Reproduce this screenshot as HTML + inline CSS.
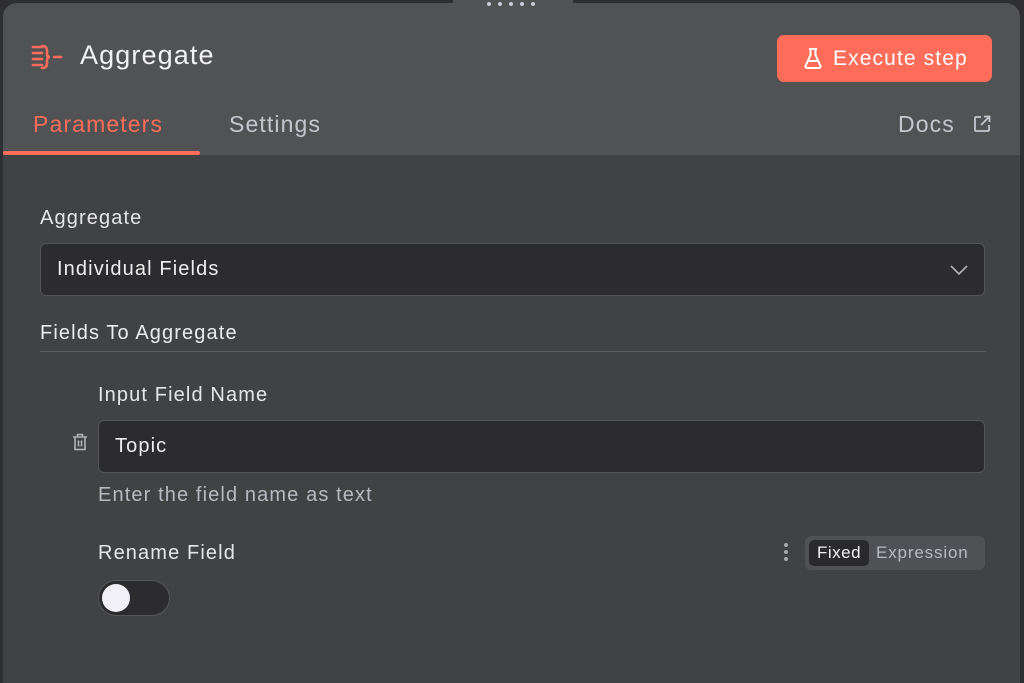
<!DOCTYPE html>
<html><head><meta charset="utf-8"><style>
*{box-sizing:border-box;margin:0;padding:0}
body{width:1024px;height:665px;overflow:hidden;background:#2e2e33;font-family:"Liberation Sans",sans-serif;position:relative;letter-spacing:0.07em}
.panel{position:absolute;left:3px;top:3px;width:1017px;height:680px;background:#414244;border-radius:14px 14px 0 0;overflow:hidden}
.head{position:absolute;left:0;top:0;width:100%;height:152px;background:#515254}
.handle{position:absolute;left:453px;top:0;width:120px;height:8px;background:#515254}
.dots{position:absolute;left:487px;top:2px;font-size:0}
.dots i{display:inline-block;width:4px;height:4px;border-radius:50%;background:#c8cad4;margin-right:7px}
.t{position:absolute;white-space:nowrap}
.btn{position:absolute;left:774px;top:32px;width:215px;height:47px;background:#ff6d5a;border-radius:7px;color:#fff;font-size:21px}
.tabline{position:absolute;left:0;top:148px;width:197px;height:4px;background:#ff6d5a;border-radius:2px}
.input{position:absolute;background:#2c2c2e;border:1px solid #545558;border-radius:6px;color:#eee;font-size:20px}
.sep{position:absolute;left:37px;top:348px;width:946px;height:1px;background:#5c5d60}
</style></head><body>
<div class="panel">
<div class="head"></div>
<svg style="position:absolute;left:27px;top:40px" width="36" height="28" viewBox="0 0 36 28" fill="none" stroke="#ff6d5a" stroke-width="2.6" stroke-linecap="round"><path d="M3 4h9M3 10h9M3 16h9M3 22h9M12 3c4 0 5 2 5 5v3c0 2 1 3 3 3c-2 0-3 1-3 3v3c0 3-1 5-5 5M24 14h7"/></svg>
<div class="t" style="left:77px;top:37px;font-size:27px;color:#f2f2f2">Aggregate</div>
<div class="btn"><svg style="position:absolute;left:27px;top:13px" width="18" height="21" viewBox="0 0 18 21" fill="none" stroke="#fff" stroke-width="2"><path d="M5 1h8M6.5 1v6L1.5 18a1.5 1.5 0 0 0 1.4 2h12.2a1.5 1.5 0 0 0 1.4-2L11.5 7V1M3.5 13h11"/></svg><span style="position:absolute;left:56px;top:12px">Execute step</span></div>
<div class="t" style="left:30px;top:108px;font-size:23px;color:#ff6d5a">Parameters</div>
<div class="t" style="left:226px;top:108px;font-size:23px;color:#c4c7ce">Settings</div>
<div class="t" style="left:895px;top:108px;font-size:23px;color:#c4c7ce">Docs</div>
<svg style="position:absolute;left:970px;top:112px" width="18" height="18" viewBox="0 0 18 18" fill="none" stroke="#c4c7ce" stroke-width="1.8"><path d="M8 2H3a1 1 0 0 0-1 1v12a1 1 0 0 0 1 1h12a1 1 0 0 0 1-1v-5M11 1.5h5.5V7M16.5 1.5L8 10"/></svg>
<div class="tabline"></div>
<div class="t" style="left:37px;top:204px;font-size:20px;color:#e6e6e8">Aggregate</div>
<div class="input" style="left:37px;top:240px;width:945px;height:53px"><span style="position:absolute;left:16px;top:14px">Individual Fields</span>
<svg style="position:absolute;right:16px;top:21px" width="18" height="11" viewBox="0 0 18 11" fill="none" stroke="#b0b2b8" stroke-width="1.6"><path d="M1 1l8 8 8-8"/></svg></div>
<div class="t" style="left:37px;top:319px;font-size:20px;color:#ececee">Fields To Aggregate</div>
<div class="sep"></div>
<div class="t" style="left:95px;top:381px;font-size:20px;color:#e6e6e8">Input Field Name</div>
<svg style="position:absolute;left:69px;top:430px" width="16" height="18" viewBox="0 0 16 18" fill="none" stroke="#b0b2b8" stroke-width="1.6"><path d="M1 4h14M5.5 4V1.5h5V4M3 4v12.5h10V4M6.5 7.5v6M9.5 7.5v6"/></svg>
<div class="input" style="left:95px;top:417px;width:887px;height:53px"><span style="position:absolute;left:16px;top:14px">Topic</span></div>
<div class="t" style="left:95px;top:481px;font-size:20px;color:#b8bac2">Enter the field name as text</div>
<div class="t" style="left:95px;top:539px;font-size:20px;color:#e6e6e8">Rename Field</div>
<div style="position:absolute;left:95px;top:577px;width:72px;height:36px;border-radius:18px;background:#2c2c2e;border:1px solid #56575a"><div style="position:absolute;left:3px;top:3px;width:28px;height:28px;border-radius:50%;background:#f0f0f6"></div></div>
<div style="position:absolute;left:781px;top:540px;font-size:0"><i style="display:block;width:4px;height:4px;border-radius:50%;background:#aaa;margin-bottom:3px"></i><i style="display:block;width:4px;height:4px;border-radius:50%;background:#aaa;margin-bottom:3px"></i><i style="display:block;width:4px;height:4px;border-radius:50%;background:#aaa"></i></div>
<div style="position:absolute;left:802px;top:533px;width:180px;height:34px;border-radius:6px;background:#505154">
<div style="position:absolute;left:4px;top:4px;width:60px;height:26px;border-radius:5px;background:#2a2a2c;color:#f0f0f0;font-size:17px;text-align:center;line-height:26px;letter-spacing:0.03em">Fixed</div>
<div class="t" style="left:71px;top:7px;font-size:17px;color:#b8bac2;letter-spacing:0.05em">Expression</div></div>
</div>
<div class="handle"></div>
<div class="dots"><i></i><i></i><i></i><i></i><i></i></div>
</body></html>
